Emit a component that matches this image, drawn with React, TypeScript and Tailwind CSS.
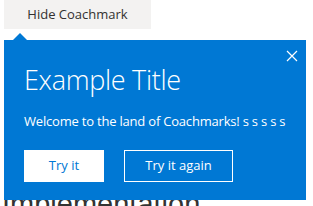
import React from "react";

export default function App() {
  return (
    <div className="relative w-[313px] h-[206px] overflow-hidden bg-white" style={{ fontFamily: '"Open Sans", "Noto Sans", sans-serif' }}>
      <div className="pl-[4px]">
        <button className="h-[29px] w-[147px] bg-[#f3f2f1] text-[#323130] text-[13px] font-medium flex items-center justify-center">
          Hide Coachmark
        </button>
      </div>
      <div className="mt-[159px] pl-[2px] text-[29px] leading-[1.15] text-[#333333]" style={{ fontFamily: '"Liberation Sans", Arial, sans-serif' }}>
        Implementation
      </div>

      <div className="absolute left-[4px] top-[40px] w-[302px] h-[160px] bg-[#0078d4] text-white">
        <div className="absolute left-[9px] -top-[7px] w-0 h-0 border-l-[7px] border-r-[7px] border-b-[7px] border-l-transparent border-r-transparent border-b-[#0078d4]" />
        <button className="absolute right-[8px] top-[10px] w-[12px] h-[12px] flex items-center justify-center">
          <svg width="12" height="12" viewBox="0 0 12 12" fill="none" stroke="white" strokeWidth="1.2">
            <path d="M1 1L11 11M11 1L1 11" />
          </svg>
        </button>
        <div className="pl-[20px] pr-[20px] pt-[22px] flex flex-col">
          <div className="text-[27px] font-light leading-[36px] tracking-[-0.3px]">Example Title</div>
          <div className="mt-[14px] text-[13px] leading-[18px] tracking-[-0.2px]">Welcome to the land of Coachmarks! s s s s s</div>
          <div className="mt-[20px] flex gap-[20px]">
            <button className="w-[80px] h-[32px] bg-white text-[#0078d4] text-[13px] font-medium flex items-center justify-center">Try it</button>
            <button className="w-[109px] h-[32px] border border-white text-white text-[13px] font-medium flex items-center justify-center">Try it again</button>
          </div>
        </div>
      </div>
    </div>
  );
}
